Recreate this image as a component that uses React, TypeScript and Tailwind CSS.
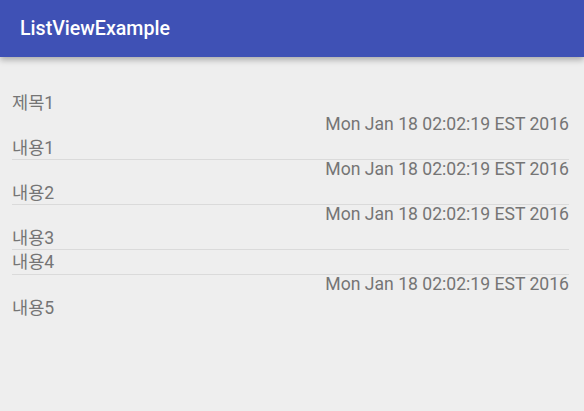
const DATE = "Mon Jan 18 02:02:19 EST 2016";

type Item = { title?: string; date?: string; content: string };

const ITEMS: Item[] = [
  { title: "제목1", date: DATE, content: "내용1" },
  { date: DATE, content: "내용2" },
  { date: DATE, content: "내용3" },
  { content: "내용4" },
  { date: DATE, content: "내용5" },
];

export default function App() {
  return (
    <div
      className="w-[584px] h-[411px] bg-[#eeeeee] overflow-hidden flex flex-col"
      style={{ fontFamily: 'Roboto, "Noto Sans CJK KR", sans-serif' }}
    >
      <div className="h-[57px] shrink-0 bg-[#3f51b5] flex items-center pl-[20px] shadow-[0_3px_6px_rgba(0,0,0,0.28)] relative z-10">
        <span className="text-white text-[19.6px] font-medium">ListViewExample</span>
      </div>
      <div className="pl-[12px] pr-[15px] pt-[34px] text-[17.6px] text-[#757575]">
        {ITEMS.map((item, i) => (
          <div
            key={i}
            className={i < ITEMS.length - 1 ? "border-b border-[#dadada]" : ""}
          >
            {item.title && <div className="h-[24px] leading-[24px]">{item.title}</div>}
            {item.date && (
              <div className="h-[19px] leading-[19px] text-right">{item.date}</div>
            )}
            <div className={item.date ? "h-[25px] leading-[29px]" : "h-[24px] leading-[24px]"}>
              {item.content}
            </div>
          </div>
        ))}
      </div>
    </div>
  );
}
